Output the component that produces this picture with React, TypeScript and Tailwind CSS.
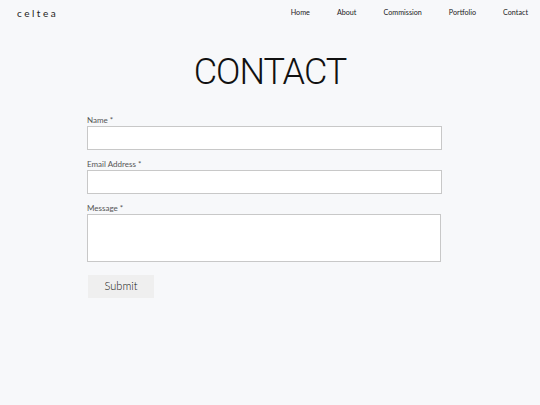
import React from "react";

export default function App() {
  const nav = ["Home", "About", "Commission", "Portfolio", "Contact"];
  return (
    <div className="w-[540px] h-[405px] bg-[#f7f8fa] text-[#111] overflow-hidden" style={{ fontFamily: "Lato, 'Noto Sans', sans-serif" }}>
      <header className="flex items-center justify-between h-[26px] pl-[17px] pr-[12px]">
        <div className="text-[10px] tracking-[2.5px] text-[#222] pt-[1px]">celtea</div>
        <nav className="flex gap-[27px] text-[7.2px] text-[#222] pt-[1px]">
          {nav.map((n) => (
            <span key={n}>{n}</span>
          ))}
        </nav>
      </header>
      <h1 className="text-center text-[36px] font-light leading-none tracking-[-1px] mt-[28px] text-[#111]" style={{ fontFamily: "Roboto, sans-serif" }}>CONTACT</h1>
      <form className="ml-[87px] w-[355px] mt-[26px] flex flex-col">
        <label className="text-[8px] text-[#555] leading-none mb-[2px]">Name *</label>
        <div className="h-[24px] bg-white border border-[#c8c8c8]" />
        <label className="text-[8px] text-[#555] leading-none mt-[10px] mb-[2px]">Email Address *</label>
        <div className="h-[24px] bg-white border border-[#c8c8c8]" />
        <label className="text-[8px] text-[#555] leading-none mt-[10px] mb-[2px]">Message *</label>
        <div className="h-[48px] w-[354px] bg-white border border-[#c8c8c8]" />
        <button type="button" className="mt-[13px] ml-[1px] w-[66px] h-[23px] bg-[#efefef] text-[11px] font-light text-[#111]">Submit</button>
      </form>
    </div>
  );
}
